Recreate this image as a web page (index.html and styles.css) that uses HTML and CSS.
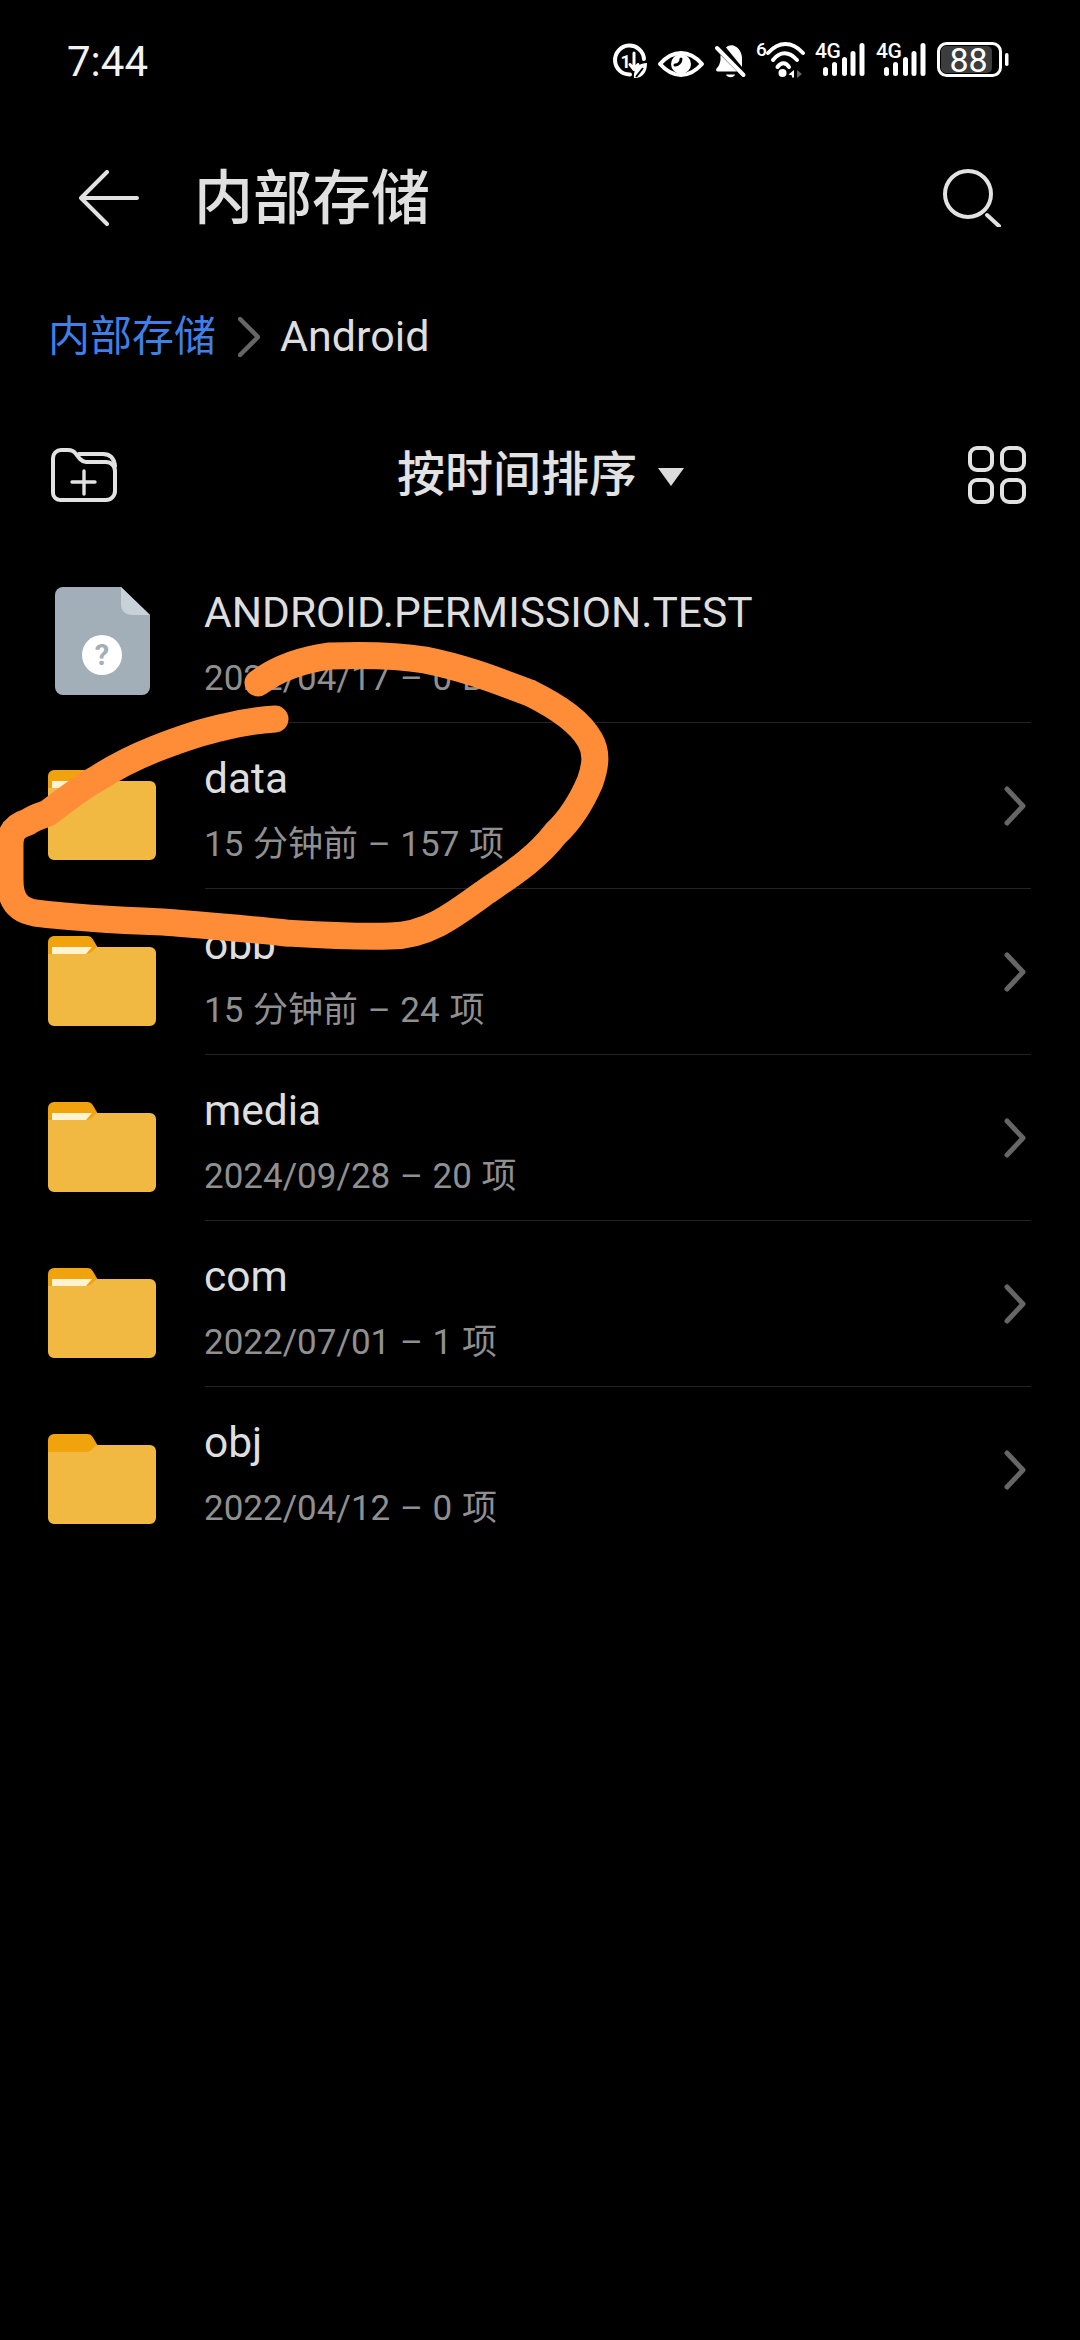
FILE: index.html
```html
<!DOCTYPE html>
<html lang="zh">
<head>
<meta charset="utf-8">
<title>内部存储</title>
<link rel="stylesheet" href="styles.css">
</head>
<body>
<svg class="defs" width="0" height="0" aria-hidden="true">
  <symbol id="folder-base" viewBox="0 0 108 90">
    <path class="f-tab" d="M0 22V6a6 6 0 0 1 6-6H39c3 0 4.500 1 6 3.500L50 12V22z"/>
    <path class="f-body" d="M0 84V18H37c4 0 6-1.500 8-3.500L48.500 11H102a6 6 0 0 1 6 6V84a6 6 0 0 1-6 6H6a6 6 0 0 1-6-6z"/>
  </symbol>
  <symbol id="chev" viewBox="0 0 24 40">
    <path class="chev-line" d="M3 3L19 20 3 37"/>
  </symbol>
</svg>
<div class="screen">
  <header class="status">
    <span class="time">7:44</span>
    <div class="status-icons">
      <svg class="si" width="34" height="36" viewBox="0 0 34 36">
        <path class="st" d="M17 32.500A14.500 14.500 0 1 1 31 17"/>
        <text class="st-num" x="7.500" y="26">1</text>
        <path class="st-thin" d="M21 11V27M17 22.500l4 5 4-5"/>
        <path class="sf" d="M34 21C26 21 20 26 21 36 29 36.500 34 31 34 21z"/>
        <path class="leaf-vein" d="M23 35L30 26"/>
      </svg>
      <svg class="si" width="46" height="36" viewBox="0 0 46 36">
        <path class="st" d="M2 22C10 13 17 11 23 11S36 13 44 22C36 31 29 33 23 33S10 31 2 22z"/>
        <circle class="sf" cx="23" cy="22" r="10"/>
        <path class="eye-glint" d="M17 23a6 6 0 0 0 6-6"/>
      </svg>
      <svg class="si" width="30" height="36" viewBox="0 0 30 36">
        <path class="sf" d="M11 5.500C13 3.500 16 2.700 18.500 3.500 24 5.500 27 11 27 16.500V25z"/>
        <path class="sf" d="M5.500 13L22 29.500H2.500C1 29.500 .5 27.500 1.800 26.300 4 24 5 21 5.500 18z"/>
        <path class="sf" d="M11 32.500H20C19 36 12 36 11 32.500z"/>
        <path class="st" d="M2 6L28.500 33"/>
      </svg>
      <svg class="si" width="48" height="36" viewBox="0 0 48 36">
        <text class="st-6" x="0" y="14">6</text>
        <path class="st" d="M12 11C23 -1 36 -1 47 11"/>
        <path class="st" d="M17 18C24 9 33 9 41 18"/>
        <path class="st" d="M21.500 25C25 20 30 20 33 25"/>
        <circle class="sf" cx="26.500" cy="31" r="4"/>
        <path class="sf" d="M38 28V35.500H36V33.500L32.500 32.500z"/>
        <path class="sg" d="M41 28L46 32 41 36z"/>
      </svg>
      <svg class="si sig" width="50" height="36" viewBox="0 0 50 36">
        <text class="st-4g" x="0" y="16">4G</text>
        <rect class="sf" x="8" y="25" width="5" height="9" rx="2.500"/>
        <rect class="sf" x="17" y="20" width="5" height="14" rx="2.500"/>
        <rect class="sf" x="27" y="15" width="5" height="19" rx="2.500"/>
        <rect class="sf" x="35.500" y="9" width="5" height="25" rx="2.500"/>
        <rect class="sf" x="44.500" y="1" width="5" height="33" rx="2.500"/>
      </svg>
      <svg class="si sig2" width="50" height="36" viewBox="0 0 50 36">
        <text class="st-4g" x="0" y="16">4G</text>
        <rect class="sf" x="8" y="25" width="5" height="9" rx="2.500"/>
        <rect class="sf" x="17" y="20" width="5" height="14" rx="2.500"/>
        <rect class="sf" x="27" y="15" width="5" height="19" rx="2.500"/>
        <rect class="sf" x="35.500" y="9" width="5" height="25" rx="2.500"/>
        <rect class="sf" x="44.500" y="1" width="5" height="33" rx="2.500"/>
      </svg>
      <svg class="si bat" width="72" height="36" viewBox="0 0 72 36">
        <rect class="bat-fill" x="4" y="4" width="51" height="27" rx="5"/>
        <rect class="bat-line" x="1.500" y="1.500" width="62" height="32" rx="8"/>
        <rect class="sf" x="68" y="11" width="3.500" height="13" rx="1.700"/>
        <text class="bat-num" x="31.500" y="30">88</text>
      </svg>
    </div>
  </header>

  <div class="titlebar">
    <svg class="back" width="60" height="56" viewBox="0 0 60 56"><path class="ic" d="M28 2L2 28 28 54M2 28H58"/></svg>
    <h1 class="title">内部存储</h1>
    <svg class="search" width="58" height="58" viewBox="0 0 58 58"><circle class="ic" cx="25" cy="25" r="23"/><path class="ic" d="M44 46L56 57"/></svg>
  </div>

  <nav class="crumbs">
    <span class="crumb-root">内部存储</span>
    <svg class="crumb-sep" width="22" height="40" viewBox="0 0 22 40"><path class="crumb-line" d="M2 2L20 20 2 38"/></svg>
    <span class="crumb-cur">Android</span>
  </nav>

  <div class="sortbar">
    <svg class="newdir" width="66" height="54" viewBox="0 0 66 54"><path class="ic" d="M2 45V10a8 8 0 0 1 8-8H17c4 0 6 1 8 4l4 5c2 2 3 3 6 3H55a9 9 0 0 1 9 9V43a9 9 0 0 1-9 9H9a7 7 0 0 1-7-7z"/><path class="ic" d="M28 6H52c6 0 11 3 12 12"/><path class="ic-thin" d="M21 34H44M33 23V46"/></svg>
    <div class="sort">
      <span class="sort-label">按时间排序</span>
      <span class="caret"></span>
    </div>
    <div class="gridbtn">
      <span class="cell"></span><span class="cell"></span><span class="cell"></span><span class="cell"></span>
    </div>
  </div>

  <main class="list">
    <div class="row">
      <div class="thumb thumb-file">
        <svg width="95" height="108" viewBox="0 0 95 108">
          <path class="file-body" d="M8 0H66L95 28V100a8 8 0 0 1-8 8H8a8 8 0 0 1-8-8V8a8 8 0 0 1 8-8z"/>
          <path class="file-ear" d="M66 0L95 28H76a10 10 0 0 1-10-10z"/>
          <circle class="file-dot" cx="47" cy="68" r="20"/>
          <text class="file-q" x="47" y="78">?</text>
        </svg>
      </div>
      <div class="cell-main">
        <div class="texts">
          <div class="name">ANDROID.PERMISSION.TEST</div>
          <div class="meta">2022/04/17 – 0 B</div>
        </div>
      </div>
    </div>

    <div class="row">
      <div class="thumb"><svg class="folder" width="108" height="90"><use href="#folder-base"/><path class="f-strip" d="M4 11H44L38 18H4z"/></svg></div>
      <div class="cell-main">
        <div class="texts"><div class="name">data</div><div class="meta">15 分钟前 – 157 项</div></div>
        <svg class="go" width="24" height="40"><use href="#chev"/></svg>
      </div>
    </div>

    <div class="row">
      <div class="thumb"><svg class="folder" width="108" height="90"><use href="#folder-base"/><path class="f-strip" d="M4 11H44L38 18H4z"/></svg></div>
      <div class="cell-main">
        <div class="texts"><div class="name">obb</div><div class="meta">15 分钟前 – 24 项</div></div>
        <svg class="go" width="24" height="40"><use href="#chev"/></svg>
      </div>
    </div>

    <div class="row">
      <div class="thumb"><svg class="folder" width="108" height="90"><use href="#folder-base"/><path class="f-strip" d="M4 11H44L38 18H4z"/></svg></div>
      <div class="cell-main">
        <div class="texts"><div class="name">media</div><div class="meta">2024/09/28 – 20 项</div></div>
        <svg class="go" width="24" height="40"><use href="#chev"/></svg>
      </div>
    </div>

    <div class="row">
      <div class="thumb"><svg class="folder" width="108" height="90"><use href="#folder-base"/><path class="f-strip" d="M4 11H44L38 18H4z"/></svg></div>
      <div class="cell-main">
        <div class="texts"><div class="name">com</div><div class="meta">2022/07/01 – 1 项</div></div>
        <svg class="go" width="24" height="40"><use href="#chev"/></svg>
      </div>
    </div>

    <div class="row row-last">
      <div class="thumb"><svg class="folder" width="108" height="90"><use href="#folder-base"/></svg></div>
      <div class="cell-main">
        <div class="texts"><div class="name">obj</div><div class="meta">2022/04/12 – 0 项</div></div>
        <svg class="go" width="24" height="40"><use href="#chev"/></svg>
      </div>
    </div>
  </main>

  <svg class="scribble" width="1080" height="2340" viewBox="0 0 1080 2340" aria-hidden="true">
    <path class="scribble-line" d="M258 683C278 668 300 660 330 656C360 655 395 655 425 660C465 668 495 680 530 693C560 708 580 722 590 740C597 752 596 765 590 782C580 805 570 820 556 833C535 860 510 875 484 893C450 918 425 936 390 936C350 937 320 935 286 933C240 928 200 925 163 922C110 920 75 918 35 913C18 910 10 900 10 880V845C10 832 15 826 28 822C36 816 44 815 48 813C65 800 80 788 98 778C115 767 135 757 155 749C178 740 200 732 224 727C240 723 258 720 275 719"/>
  </svg>
</div>
</body>
</html>
```

FILE: styles.css
```css
* { box-sizing: border-box; }
html, body { margin: 0; padding: 0; background: #000; }
body { width: 1080px; height: 2340px; overflow: hidden; font-family: Roboto, "Noto Sans CJK SC", sans-serif; color: #e2e2e2; }
.defs { position: absolute; }
.screen { position: relative; width: 1080px; height: 2340px; display: flex; flex-direction: column; }

.status { height: 120px; display: flex; align-items: center; justify-content: space-between; padding: 0 71px 0 67px; }
.time { font-size: 42px; color: #f2f2f2; line-height: 1; margin-top: 3px; }
.status-icons { display: flex; align-items: center; gap: 11px; }
.si { display: block; overflow: visible; }
.sf { fill: #fff; }
.sg { fill: #666; }
.st { fill: none; stroke: #fff; stroke-width: 4; stroke-linecap: round; stroke-linejoin: round; }
.st-thin { fill: none; stroke: #fff; stroke-width: 3; stroke-linecap: round; stroke-linejoin: round; }
.leaf-vein { fill: none; stroke: #000; stroke-width: 2; }
.eye-glint { fill: none; stroke: #000; stroke-width: 3; stroke-linecap: round; }
.st-num { fill: #fff; font-size: 18px; font-weight: 700; }
.st-6 { fill: #fff; font-size: 19px; font-weight: 500; }
.st-4g { fill: #fff; font-size: 21px; font-weight: 500; letter-spacing: -.5px; }
.bat-fill { fill: #3d3d3d; }
.bat-line { fill: none; stroke: #fff; stroke-width: 3; }
.bat-num { fill: #fff; font-size: 34px; text-anchor: middle; }

.titlebar { height: 155px; display: flex; align-items: center; padding: 0 79px 0 79px; }
.title { margin: 4px 0 0 55px; flex: 1; font-size: 59px; font-weight: 500; line-height: 1.2; color: #e0e0e0; }
.ic { fill: none; stroke: #e2e2e2; stroke-width: 4; stroke-linecap: round; stroke-linejoin: round; }
.ic-thin { fill: none; stroke: #e2e2e2; stroke-width: 3.4; stroke-linecap: round; }

.crumbs { height: 122px; display: flex; align-items: center; padding: 2px 0 0 48px; line-height: 1.2; }
.crumb-root { color: #3f7fe6; font-size: 42px; }
.crumb-sep { margin: 0 20px 0 22px; }
.crumb-line { fill: none; stroke: #666; stroke-width: 4.500; stroke-linecap: round; stroke-linejoin: round; }
.crumb-cur { color: #dedede; font-size: 43px; }

.sortbar { height: 160px; display: flex; align-items: center; justify-content: space-between; padding: 0 54px 4px 51px; }
.sort { display: flex; align-items: center; gap: 21px; margin-right: 4px; }
.sort-label { font-size: 48px; font-weight: 500; line-height: 1.2; }
.caret { width: 0; height: 0; margin-top: 4px; border-left: 13px solid transparent; border-right: 13px solid transparent; border-top: 18px solid #dcdcdc; }
.gridbtn { display: grid; grid-template-columns: 26px 26px; grid-auto-rows: 26px; gap: 6px 6px; }
.cell { border: 4px solid #e2e2e2; border-radius: 9px; }

.list { display: flex; flex-direction: column; }
.row { height: 166px; display: flex; }
.thumb { width: 205px; flex: none; padding: 47px 0 0 48px; }
.thumb svg { display: block; }
.thumb-file { padding: 30px 0 0 55px; }
.cell-main { flex: none; width: 826px; display: flex; align-items: center; justify-content: space-between; border-bottom: 1px solid #242424; }
.row-last .cell-main { border-bottom: 0; }
.texts { padding-top: 10px; margin-left: -1px; }
.name { font-size: 42.5px; line-height: 60px; color: #dedede; white-space: nowrap; }
.meta { font-size: 35px; line-height: 56px; color: #909090; white-space: nowrap; margin-top: 8px; word-spacing: 1px; }
.go { display: block; margin-right: 3px; }
.chev-line { fill: none; stroke: #666; stroke-width: 5; stroke-linecap: round; stroke-linejoin: round; }

.f-tab { fill: #f0a30c; }
.f-body { fill: #f2b942; }
.f-strip { fill: #fff3d0; }
.file-body { fill: #a3afb8; }
.file-ear { fill: #c8d1d8; }
.file-dot { fill: #fff; }
.file-q { fill: #a3afb8; font-size: 29px; font-weight: 700; text-anchor: middle; }

.scribble { position: absolute; left: 0; top: 0; pointer-events: none; }
.scribble-line { fill: none; stroke: #ff8c37; stroke-width: 27; stroke-linecap: round; stroke-linejoin: round; }
```
